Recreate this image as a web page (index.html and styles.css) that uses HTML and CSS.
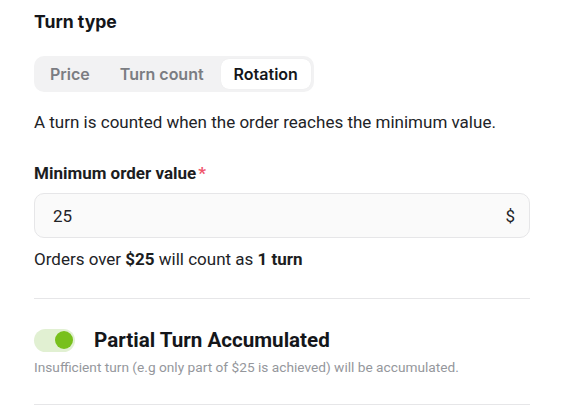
FILE: index.html
```html
<!DOCTYPE html>
<html lang="en">
<head>
<meta charset="utf-8">
<link rel="stylesheet" href="styles.css">
</head>
<body>
<div class="panel">
  <h2 class="title">Turn type</h2>
  <div class="segmented">
    <button class="tab">Price</button>
    <button class="tab">Turn count</button>
    <button class="tab active">Rotation</button>
  </div>
  <p class="desc">A turn is counted when the order reaches the minimum value.</p>
  <label class="label">Minimum order value<span class="req">*</span></label>
  <div class="input">
    <span class="value">25</span>
    <span class="suffix">$</span>
  </div>
  <p class="hint">Orders over <b>$25</b> will count as <b>1 turn</b></p>
  <div class="divider"></div>
  <div class="toggle-row">
    <span class="switch"><span class="knob"></span></span>
    <span class="toggle-title">Partial Turn Accumulated</span>
  </div>
  <p class="sub">Insufficient turn (e.g only part of $25 is achieved) will be accumulated.</p>
  <div class="divider last"></div>
</div>
</body>
</html>
```
FILE: styles.css
```css
html, body {
  margin: 0;
  padding: 0;
  background: #ffffff;
}
body {
  font-family: Roboto, "Liberation Sans", sans-serif;
  color: #1f2024;
}
.panel {
  width: 496px;
  padding: 10px 0 0 34px;
}
.title {
  font-family: Inter, Roboto, sans-serif;
  font-size: 17.6px;
  font-weight: 700;
  line-height: 24px;
  margin: 0;
  color: #14161a;
}
.segmented {
  display: inline-flex;
  gap: 4px;
  margin-top: 22px;
  padding: 3px;
  background: #f2f2f3;
  border-radius: 10px;
  height: 30px;
}
.tab {
  font-family: Inter, Roboto, sans-serif;
  font-size: 16px;
  font-weight: 600;
  color: #7b7d82;
  background: transparent;
  border: 0;
  padding: 0 13px;
  border-radius: 8px;
  height: 30px;
  cursor: pointer;
}
.tab.active {
  background: #ffffff;
  color: #14161a;
  box-shadow: 0 0 1px rgba(0,0,0,0.08);
}
.desc {
  margin: 18px 0 0;
  font-size: 17px;
  line-height: 24px;
  color: #222327;
}
.label {
  display: block;
  margin-top: 27px;
  font-size: 17px;
  font-weight: 700;
  line-height: 24px;
  color: #1c1d21;
}
.req {
  color: #f0566d;
  margin-left: 2px;
}
.input {
  margin-top: 8px;
  height: 43px;
  border: 1px solid #e6e6e8;
  border-radius: 10px;
  background: #fafafa;
  display: flex;
  align-items: center;
  justify-content: space-between;
  padding: 0 14px 0 18px;
  font-size: 17px;
  color: #222327;
}
.hint {
  margin: 9px 0 0;
  font-size: 17px;
  line-height: 24px;
  color: #222327;
}
.hint b {
  font-weight: 700;
  color: #1c1d21;
}
.divider {
  margin-top: 27px;
  height: 1px;
  background: #e6e6e8;
}
.toggle-row {
  display: flex;
  align-items: center;
  gap: 19px;
  margin-top: 29px;
}
.switch {
  width: 41px;
  height: 23px;
  border-radius: 12px;
  background: #e1f0d2;
  position: relative;
  flex: none;
}
.knob {
  position: absolute;
  top: 2.5px;
  right: 2px;
  width: 18px;
  height: 18px;
  border-radius: 50%;
  background: #78c01c;
}
.toggle-title {
  font-size: 20.6px;
  font-weight: 700;
  color: #14161a;
  line-height: 24px;
}
.sub {
  margin: 5px 0 0;
  font-size: 13.7px;
  line-height: 20px;
  color: #95979c;
}
.divider.last {
  margin-top: 27px;
}
```
